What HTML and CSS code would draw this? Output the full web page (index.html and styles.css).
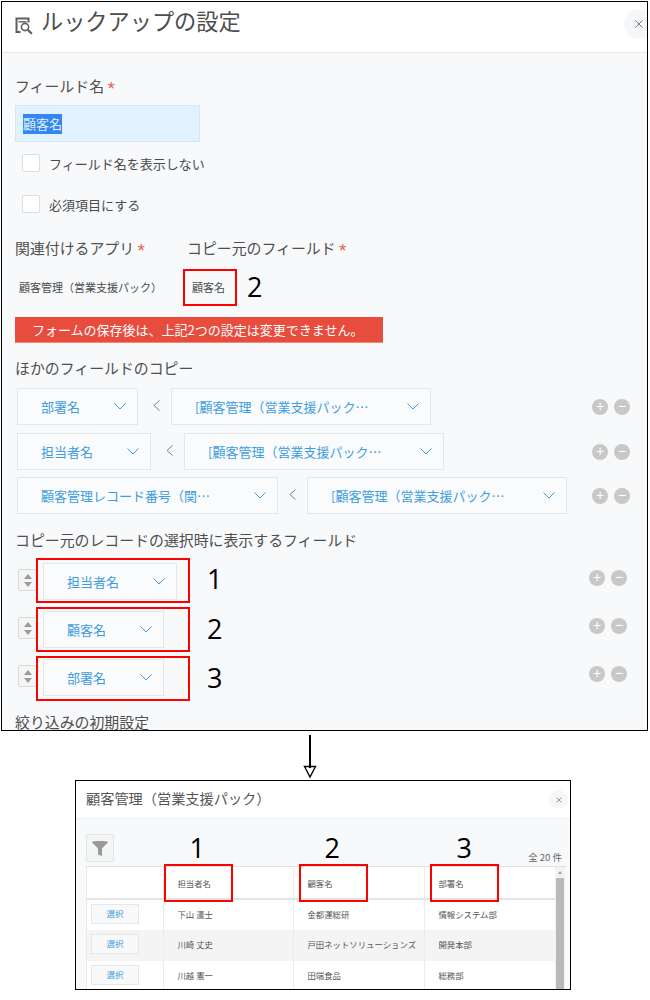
FILE: index.html
```html
<!DOCTYPE html>
<html lang="ja">
<head>
<meta charset="utf-8">
<title>ルックアップの設定</title>
<link rel="stylesheet" href="styles.css">
</head>
<body>
<section class="dialog dialog-main">
  <header class="main-head">
    <svg class="lookup-icon" viewBox="0 0 18 18" width="18" height="18" fill="none" stroke="#5f5f5f" stroke-width="2"><path d="M13.500 5.500V1.500H1.500v13.500H5.500"/><path d="M3.500 4.800h8" stroke-width="1.400"/><circle cx="10" cy="10" r="3.600" stroke-width="1.600"/><path d="M12.800 12.800l4 4" stroke-width="2.200"/></svg>
    <h1 class="main-title">ルックアップの設定</h1>
    <button class="close close-main" aria-label="閉じる"><svg viewBox="0 0 8 8" width="8" height="8" stroke="#777" stroke-width="1" fill="none"><path d="M.5.5l7 7M7.500.5l-7 7"/></svg></button>
  </header>
  <div class="main-body">
    <div class="label l-first">フィールド名 <span class="req">*</span></div>
    <div class="name-input"><span class="selected">顧客名</span></div>
    <div class="check c-first"><span class="box"></span>フィールド名を表示しない</div>
    <div class="check c-second"><span class="box"></span>必須項目にする</div>

    <div class="two-col label l-related">
      <div class="col-a">関連付けるアプリ <span class="req">*</span></div>
      <div>コピー元のフィールド <span class="req">*</span></div>
    </div>
    <div class="two-col values">
      <div class="col-a value-a">顧客管理（営業支援パック）</div>
      <div class="value-b">顧客名<span class="frame frame-source"></span><span class="num num-source">2</span></div>
    </div>
    <div class="alert"><span>フォームの保存後は、上記2つの設定は変更できません。</span></div>

    <div class="label l-copy">ほかのフィールドのコピー</div>
    <div class="copy-rows">
      <div class="row">
        <div class="select w121"><span>部署名</span><svg class="chev" viewBox="0 0 12 7" width="12" height="7"><path d="M.5.5L6 6 11.500.5"/></svg></div>
        <svg class="lt" viewBox="0 0 7 11" width="7" height="11"><path d="M6.500.5L1 5.500l5.500 5"/></svg>
        <div class="select w260 target"><span>[顧客管理（営業支援パック…</span><svg class="chev" viewBox="0 0 12 7" width="12" height="7"><path d="M.5.5L6 6 11.500.5"/></svg></div>
        <div class="ops ops-copy"><span class="op">+</span><span class="op">−</span></div>
      </div>
      <div class="row">
        <div class="select w134"><span>担当者名</span><svg class="chev" viewBox="0 0 12 7" width="12" height="7"><path d="M.5.5L6 6 11.500.5"/></svg></div>
        <svg class="lt" viewBox="0 0 7 11" width="7" height="11"><path d="M6.500.5L1 5.500l5.500 5"/></svg>
        <div class="select w260 target"><span>[顧客管理（営業支援パック…</span><svg class="chev" viewBox="0 0 12 7" width="12" height="7"><path d="M.5.5L6 6 11.500.5"/></svg></div>
        <div class="ops ops-copy"><span class="op">+</span><span class="op">−</span></div>
      </div>
      <div class="row row-tight">
        <div class="select w261"><span>顧客管理レコード番号（関…</span><svg class="chev" viewBox="0 0 12 7" width="12" height="7"><path d="M.5.5L6 6 11.500.5"/></svg></div>
        <svg class="lt" viewBox="0 0 7 11" width="7" height="11"><path d="M6.500.5L1 5.500l5.500 5"/></svg>
        <div class="select w260 target"><span>[顧客管理（営業支援パック…</span><svg class="chev" viewBox="0 0 12 7" width="12" height="7"><path d="M.5.5L6 6 11.500.5"/></svg></div>
        <div class="ops ops-copy"><span class="op">+</span><span class="op">−</span></div>
      </div>
    </div>

    <div class="label l-display">コピー元のレコードの選択時に表示するフィールド</div>
    <div class="display-rows">
      <div class="row">
        <div class="spinner"><i class="up"></i><i class="down"></i></div>
        <div class="pick">
          <div class="select w134"><span>担当者名</span><svg class="chev" viewBox="0 0 12 7" width="12" height="7"><path d="M.5.5L6 6 11.500.5"/></svg></div>
          <span class="frame frame-pick frame-p1"></span><span class="num num-pick num-p1">1</span>
        </div>
        <div class="ops ops-display"><span class="op">+</span><span class="op">−</span></div>
      </div>
      <div class="row">
        <div class="spinner"><i class="up"></i><i class="down"></i></div>
        <div class="pick">
          <div class="select w121"><span>顧客名</span><svg class="chev" viewBox="0 0 12 7" width="12" height="7"><path d="M.5.5L6 6 11.500.5"/></svg></div>
          <span class="frame frame-pick frame-p2"></span><span class="num num-pick num-p2">2</span>
        </div>
        <div class="ops ops-display"><span class="op">+</span><span class="op">−</span></div>
      </div>
      <div class="row">
        <div class="spinner"><i class="up"></i><i class="down"></i></div>
        <div class="pick">
          <div class="select w121"><span>部署名</span><svg class="chev" viewBox="0 0 12 7" width="12" height="7"><path d="M.5.5L6 6 11.500.5"/></svg></div>
          <span class="frame frame-pick frame-p3"></span><span class="num num-pick num-p3">3</span>
        </div>
        <div class="ops ops-display"><span class="op">+</span><span class="op">−</span></div>
      </div>
    </div>
    <div class="label l-filter">絞り込みの初期設定</div>
  </div>
</section>

<svg class="arrow" viewBox="0 0 20 46" width="20" height="46" fill="none" stroke="#000"><path d="M10 1v33" stroke-width="2"/><path d="M4.500 32.500h11L10 43z" stroke-width="1.400"/></svg>

<section class="dialog dialog-sub">
  <header class="sub-head">
    <h2 class="sub-title">顧客管理（営業支援パック）</h2>
    <button class="close close-sub" aria-label="閉じる"><svg viewBox="0 0 6 6" width="6" height="6" stroke="#888" stroke-width=".9" fill="none"><path d="M.5.5l5 5M5.500.5l-5 5"/></svg></button>
  </header>
  <div class="sub-body">
    <div class="tools">
      <button class="filter" aria-label="絞り込み"><svg viewBox="0 0 16 15" width="16" height="15" fill="#999"><path d="M0 1.200C0 .4 3.500 0 8 0s8 .4 8 1.200c0 .5-.6.8-1.200 1.300L10 7.500V15L6 13.500v-6L1.200 2.500C.6 2 0 1.700 0 1.200z"/></svg></button>
      <span class="count">全 20 件</span>
    </div>
    <div class="table-wrap">
      <table class="records">
        <colgroup><col class="c0"><col class="c1"><col class="c2"><col class="c3"></colgroup>
        <thead>
          <tr>
            <th></th>
            <th>担当者名<span class="frame frame-th1"></span><span class="num num-th1">1</span></th>
            <th>顧客名<span class="frame frame-th"></span><span class="num num-th2">2</span></th>
            <th>部署名<span class="frame frame-th"></span><span class="num num-th3">3</span></th>
          </tr>
        </thead>
        <tbody>
          <tr><td><span class="choose">選択</span></td><td>下山 遣士</td><td>金都運総研</td><td>情報システム部</td></tr>
          <tr class="alt"><td><span class="choose">選択</span></td><td>川崎 丈史</td><td>戸田ネットソリューションズ</td><td>開発本部</td></tr>
          <tr><td><span class="choose">選択</span></td><td>川越 憲一</td><td>田端食品</td><td>総務部</td></tr>
        </tbody>
      </table>
      <div class="scrollbar"><i class="scroll-up"></i><div class="thumb"></div></div>
    </div>
  </div>
</section>
</body>
</html>
```
FILE: styles.css
```css
* { box-sizing: border-box; }
html, body { margin: 0; padding: 0; background: #fff; }
body {
  width: 650px;
  padding: 1px 0 0 1px;
  font-family: "Noto Sans CJK JP", "Noto Sans", sans-serif;
  color: #4b4b4b;
}
button { border: 0; padding: 0; font: inherit; }

.dialog { border: 1px solid #000; overflow: hidden; position: relative; }
.dialog-main { width: 647px; height: 730px; background: #f7f9fb; }

.main-head {
  height: 51px;
  background: #fff;
  border-bottom: 1px solid #e6e9eb;
  display: flex;
  align-items: center;
  padding: 0 0 2px 13px;
  position: relative;
}
.lookup-icon { flex: none; }
.main-title {
  margin: 0 0 0 8px;
  font-size: 22.2px;
  font-weight: 400;
  line-height: 30px;
  color: #4d4d4d;
  position: relative;
  top: -6px;
}
.close {
  display: flex;
  align-items: center;
  justify-content: center;
  border-radius: 50%;
  background: #f5f7f9;
}
.close-main { position: absolute; left: 622px; top: 7px; width: 30px; height: 30px; }
.close-main svg { margin-left: -1px; }

.main-body { padding: 0 0 0 13px; }
.label { font-size: 14.9px; line-height: 20px; color: #4f4f4f; }
.req {
  color: #e8604f;
  font-family: "Liberation Sans", sans-serif;
  font-size: 19px;
  line-height: 14px;
  vertical-align: -3px;
}
.l-first { margin-top: 23px; }
.name-input {
  width: 185px;
  height: 37px;
  margin-top: 9px;
  background: #e2f1fe;
  border: 1px solid #d6e6f2;
  display: flex;
  align-items: center;
  padding-left: 7px;
}
.selected { background: #3487ee; color: #dfeeff; font-size: 13px; line-height: 20px; }
.check { display: flex; align-items: center; gap: 9px; height: 18px; font-size: 13px; padding-left: 7px; }
.c-first { margin-top: 12px; }
.c-second { margin-top: 23px; }
.box { width: 18px; height: 18px; background: #fff; border: 1px solid #dcdfe1; border-radius: 2px; }

.two-col { display: flex; }
.col-a { width: 172px; flex: none; }
.l-related { margin-top: 25px; }
.values { margin-top: 19px; height: 20px; align-items: center; font-size: 11px; line-height: 20px; }
.value-a { padding-left: 4px; }
.value-b { margin-left: 5px; position: relative; }

.frame { position: absolute; border: 2px solid #f00; pointer-events: none; }
.num {
  position: absolute;
  font-family: "Open Sans", "Liberation Sans", sans-serif;
  font-size: 27px;
  line-height: 28px;
  color: #000;
  white-space: nowrap;
}
.frame-source { left: -9px; top: -8px; width: 54px; height: 37px; }
.num-source { left: 55px; top: -4px; }

.alert {
  width: 368px;
  height: 26px;
  margin-top: 20px;
  background: #e74c3c;
  color: #fff;
  font-size: 13px;
  line-height: 26px;
  padding-left: 17px;
  border-bottom: 1px solid #f08a7e;
}
.l-copy { margin-top: 15px; }

.row { display: flex; align-items: center; height: 37px; }
.copy-rows { margin-top: 10px; padding-left: 2px; display: flex; flex-direction: column; gap: 8px; }
.row-tight { margin-top: -1px; }
.row-tight .lt { margin-left: 11px; }

.select {
  height: 37px;
  flex: none;
  background: #f9fbfc;
  border: 1px solid #e3e7e8;
  color: #3f9ddf;
  font-size: 13px;
  display: flex;
  align-items: center;
  justify-content: space-between;
  padding: 0 11px 0 23px;
  white-space: nowrap;
}
.target { margin-left: 11px; }
.w121 { width: 121px; }
.w134 { width: 134px; }
.w261 { width: 261px; }
.w260 { width: 260px; }
.chev { fill: none; stroke: #3f9ddf; stroke-width: 1; flex: none; }
.lt { fill: none; stroke: #7d7d7d; stroke-width: 1; margin: -2px 0 0 15px; flex: none; }

.ops { margin-left: auto; display: flex; gap: 6px; }
.ops-copy { margin-right: 17px; }
.ops-display { margin-right: 20px; margin-top: -7px; }
.op {
  width: 16px;
  height: 16px;
  border-radius: 50%;
  background: #c8c8c8;
  color: #fff;
  font-family: "Liberation Sans", sans-serif;
  font-size: 14px;
  line-height: 15px;
  text-align: center;
}

.l-display { margin-top: 16px; }
.display-rows { margin-top: 13px; padding-left: 3px; display: flex; flex-direction: column; gap: 11px; }
.spinner {
  width: 19px;
  height: 22px;
  flex: none;
  margin-top: -3px;
  background: #f4f5f5;
  border: 1px solid #d6d8d9;
  border-radius: 2px 0 0 2px;
  display: flex;
  flex-direction: column;
  align-items: center;
  justify-content: center;
  gap: 3px;
}
.spinner i { width: 0; height: 0; border-left: 4px solid transparent; border-right: 4px solid transparent; }
.up { border-bottom: 5px solid #9b9b9b; }
.down { border-top: 5px solid #9b9b9b; }
.pick { position: relative; margin-left: 6px; }
.frame-pick { left: -7px; width: 154px; height: 45px; }
.frame-p1 { top: -5px; }
.frame-p2 { top: -4px; }
.frame-p3 { top: -3px; }
.num-pick { left: 164px; }
.num-p1 { top: 2px; }
.num-p2 { top: 4px; }
.num-p3 { top: 5px; }
.l-filter { margin-top: 16px; }

.arrow { display: block; margin: 3px 0 0 299px; }

.dialog-sub { width: 496px; height: 210px; margin-left: 74px; background: #f7f9fa; }
.sub-head {
  height: 38px;
  background: #fff;
  border-bottom: 1px solid #eceff1;
  display: flex;
  align-items: center;
  justify-content: space-between;
  padding: 0 2px 0 10px;
}
.sub-title { margin: 0; font-size: 14.2px; font-weight: 400; color: #555; position: relative; top: -2px; }
.close-sub { width: 19px; height: 19px; margin-right: 0; }

.sub-body { padding: 15px 0 0 10px; }
.tools { height: 28px; display: flex; align-items: flex-end; justify-content: space-between; width: 476px; }
.filter {
  width: 28px;
  height: 28px;
  background: #f4f5f5;
  border: 1px solid #e4e6e7;
  display: flex;
  align-items: center;
  justify-content: center;
}
.count { font-size: 9.5px; line-height: 12px; color: #666; margin-bottom: -1px; }

.table-wrap { margin-top: 4px; display: flex; width: 480px; align-items: flex-start; border-top: 1px solid #dfe2e3; border-left: 1px solid #e8e9ea; }
.records { width: 468px; flex: none; border-collapse: collapse; table-layout: fixed; font-size: 8.4px; background: #fff; color: #555; }
.c0 { width: 76px; }
.c1 { width: 130px; }
.c2 { width: 131px; }
.c3 { width: 131px; }
.records th, .records td { padding: 0 0 0 14px; text-align: left; font-weight: 400; white-space: nowrap; border-left: 1px solid #eaeced; }
.records th:first-child, .records td:first-child { border-left: 0; padding-left: 4px; }
.records th { height: 32px; position: relative; border-bottom: 2px solid #e3e5e6; }
.records td { height: 31px; padding-bottom: 3px; }
.alt { background: #f4f4f4; }
.choose {
  display: block;
  width: 48px;
  height: 20px;
  background: #f8f9fa;
  border: 1px solid #e5e7e8;
  color: #3f9ddf;
  text-align: center;
  font-size: 8.5px;
  line-height: 17px;
}
.frame-th1 { left: 0; top: -3px; width: 69px; height: 38px; }
.frame-th { left: 5px; top: -3px; width: 69px; height: 38px; }
.num-th1 { left: 26px; top: -33px; }
.num-th2 { left: 31px; top: -33px; }
.num-th3 { left: 32px; top: -33px; }

.scrollbar { width: 10px; height: 130px; background: #f3f3f3; flex: none; padding: 4px 1px 0; display: flex; flex-direction: column; align-items: center; }
.scroll-up { width: 0; height: 0; border-left: 2.500px solid transparent; border-right: 2.500px solid transparent; border-bottom: 3px solid #999; margin-bottom: 4px; }
.thumb { width: 8px; flex: 1; background: #b9b9b9; }
```
